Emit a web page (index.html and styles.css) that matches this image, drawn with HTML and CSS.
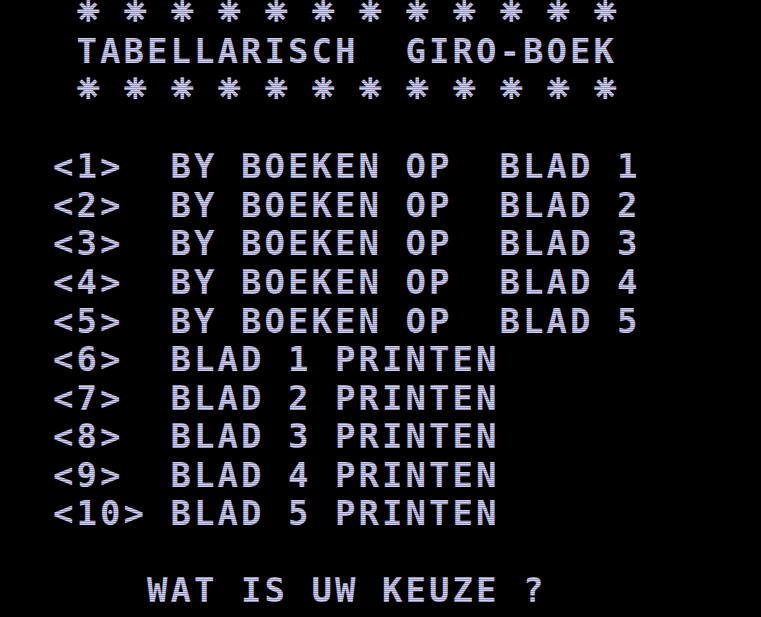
FILE: index.html
```html
<!DOCTYPE html>
<html>
<head>
<meta charset="utf-8">
<link rel="stylesheet" href="styles.css">
</head>
<body>
<div class="screen">
  <div class="row stars"><span class="cell"></span><span class="star">✳</span><span class="cell"></span><span class="star">✳</span><span class="cell"></span><span class="star">✳</span><span class="cell"></span><span class="star">✳</span><span class="cell"></span><span class="star">✳</span><span class="cell"></span><span class="star">✳</span><span class="cell"></span><span class="star">✳</span><span class="cell"></span><span class="star">✳</span><span class="cell"></span><span class="star">✳</span><span class="cell"></span><span class="star">✳</span><span class="cell"></span><span class="star">✳</span><span class="cell"></span><span class="star">✳</span></div>
  <div class="row"> TABELLARISCH  GIRO-BOEK</div>
  <div class="row stars"><span class="cell"></span><span class="star">✳</span><span class="cell"></span><span class="star">✳</span><span class="cell"></span><span class="star">✳</span><span class="cell"></span><span class="star">✳</span><span class="cell"></span><span class="star">✳</span><span class="cell"></span><span class="star">✳</span><span class="cell"></span><span class="star">✳</span><span class="cell"></span><span class="star">✳</span><span class="cell"></span><span class="star">✳</span><span class="cell"></span><span class="star">✳</span><span class="cell"></span><span class="star">✳</span><span class="cell"></span><span class="star">✳</span></div>
  <div class="row"> </div>
  <div class="row">&lt;1&gt;  BY BOEKEN OP  BLAD 1</div>
  <div class="row">&lt;2&gt;  BY BOEKEN OP  BLAD 2</div>
  <div class="row">&lt;3&gt;  BY BOEKEN OP  BLAD 3</div>
  <div class="row">&lt;4&gt;  BY BOEKEN OP  BLAD 4</div>
  <div class="row">&lt;5&gt;  BY BOEKEN OP  BLAD 5</div>
  <div class="row">&lt;6&gt;  BLAD 1 PRINTEN</div>
  <div class="row">&lt;7&gt;  BLAD 2 PRINTEN</div>
  <div class="row">&lt;8&gt;  BLAD 3 PRINTEN</div>
  <div class="row">&lt;9&gt;  BLAD 4 PRINTEN</div>
  <div class="row">&lt;10&gt; BLAD 5 PRINTEN</div>
  <div class="row"> </div>
  <div class="row">    WAT IS UW KEUZE ?</div>
</div>
</body>
</html>
```
FILE: styles.css
```css
html, body {
  margin: 0;
  padding: 0;
  background: #000;
  width: 761px;
  height: 617px;
  overflow: hidden;
}
.screen {
  position: relative;
  width: 761px;
  height: 617px;
  padding-left: 53px;
  box-sizing: border-box;
  color: #d0d0f8;
  font-family: "DejaVu Sans Mono", monospace;
  font-weight: bold;
  font-size: 34px;
  letter-spacing: 3.03px;
}
.screen::after {
  content: "";
  position: absolute;
  inset: 0;
  background: repeating-linear-gradient(to bottom, rgba(0,0,0,0) 0 1px, rgba(0,0,0,0.28) 1px 2px);
  pointer-events: none;
}
.row {
  height: 38.57px;
  line-height: 24px;
  white-space: pre;
}
.stars {
  display: flex;
}
.cell {
  width: 23.5px;
  flex: none;
}
.star {
  width: 23.5px;
  flex: none;
  text-align: center;
  letter-spacing: 0;
  font-family: "DejaVu Sans", sans-serif;
  font-size: 27px;
  line-height: 24px;
  -webkit-text-stroke: 2.2px #d0d0f8;
}
```
